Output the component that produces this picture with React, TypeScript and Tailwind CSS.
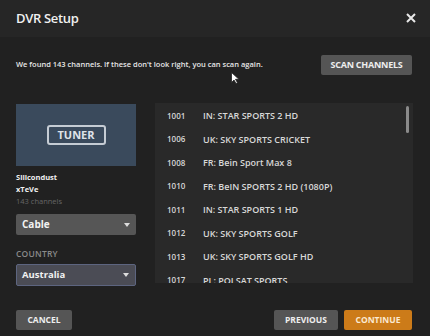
const channels = [
  { num: '1001', name: 'IN: STAR SPORTS 2 HD' },
  { num: '1006', name: 'UK: SKY SPORTS CRICKET' },
  { num: '1008', name: 'FR: Bein Sport Max 8' },
  { num: '1010', name: 'FR: BeIN SPORTS 2 HD (1080P)' },
  { num: '1011', name: 'IN: STAR SPORTS 1 HD' },
  { num: '1012', name: 'UK: SKY SPORTS GOLF' },
  { num: '1013', name: 'UK: SKY SPORTS GOLF HD' },
  { num: '1017', name: 'PL: POLSAT SPORTS' },
];

function Caret() {
  return (
    <svg width="6" height="4" viewBox="0 0 6 4" className="fill-[#ddd]">
      <path d="M0 0h6L3 4z" />
    </svg>
  );
}

export default function App() {
  return (
    <div
      className="relative w-[430px] h-[336px] overflow-hidden bg-[#212121] text-white flex flex-col"
      style={{ fontFamily: '"Open Sans", "Noto Sans", sans-serif' }}
    >
      {/* header */}
      <div className="h-[37px] shrink-0 flex items-center justify-between pl-4 pr-[14px] bg-[#262626]">
        <h1 className="text-[13px] font-semibold tracking-tight text-[#f0f0f0]">DVR Setup</h1>
        <svg width="10" height="10" viewBox="0 0 10 10" className="stroke-[#e8e8e8] -mt-px" strokeWidth="2">
          <path d="M1 1l8 8M9 1l-8 8" />
        </svg>
      </div>

      {/* info row */}
      <div className="flex items-center justify-between pl-4 pr-[18px] mt-[18px]">
        <p className="text-[7.5px] font-semibold text-[#e6e6e6]">
          We found 143 channels. If these don't look right, you can scan again.
        </p>
        <button className="w-[91px] h-[20px] rounded-[2px] bg-[#555] text-[9px] font-bold text-[#eee] tracking-tight">
          SCAN CHANNELS
        </button>
      </div>

      {/* main */}
      <div className="flex gap-[19px] pl-4 pr-[17px] mt-[28px]">
        <div className="w-[120px] shrink-0 flex flex-col">
          <div className="h-[62px] mt-px bg-[#3a4a5c] flex items-center justify-center">
            <div className="w-[59px] h-[20px] rounded-[3px] border-2 border-[#c5ccd4] flex items-center justify-center text-[11px] font-bold text-[#dfe3e8]">
              TUNER
            </div>
          </div>
          <div className="mt-[5px] text-[7.5px] font-bold leading-[12px] text-[#f0f0f0]">Silicondust</div>
          <div className="text-[7.5px] font-bold leading-[12px] text-[#f0f0f0]">xTeVe</div>
          <div className="text-[7.5px] leading-[12px] text-[#666]">143 channels</div>
          <div className="mt-[7px] h-[21px] bg-[#565656] rounded-[2px] flex items-center justify-between pl-[6px] pr-[6px]">
            <span className="text-[10px] font-bold text-[#f2f2f2]">Cable</span>
            <Caret />
          </div>
          <div className="mt-[13px] text-[8.5px] font-semibold text-[#8a8a8a] tracking-wide">COUNTRY</div>
          <div className="mt-[3px] h-[22px] bg-[#4b4c55] border border-[#5d6580] rounded-[2px] flex items-center justify-between pl-[5px] pr-[6px]">
            <span className="text-[9.5px] font-bold text-[#f2f2f2]">Australia</span>
            <Caret />
          </div>
        </div>

        <div className="relative flex-1 h-[186px] bg-[#292929] overflow-hidden">
          <div className="flex flex-col pt-[1px]">
            {channels.map((c) => (
              <div key={c.num} className="h-[23.5px] flex items-center font-semibold text-[#d8d8d8]">
                <span className="w-[36px] pl-3 box-content text-[8px]">{c.num}</span>
                <span className="text-[9px]">{c.name}</span>
              </div>
            ))}
          </div>
          <div className="absolute left-0 right-0 bottom-0 h-[6px] bg-[#212121]" />
          <div className="absolute right-[4px] top-[3px] w-[3px] h-[27px] rounded-full bg-[#8a8a8a]" />
        </div>
      </div>

      {/* footer */}
      <div className="mt-auto mb-[6px] flex items-center justify-between pl-4 pr-[18px]">
        <button className="w-[56px] h-[20px] rounded-[2px] bg-[#555] text-[8.5px] font-bold text-[#eee]">CANCEL</button>
        <div className="flex gap-[6px]">
          <button className="w-[64px] h-[20px] rounded-[2px] bg-[#555] text-[8.5px] font-bold text-[#eee]">PREVIOUS</button>
          <button className="w-[68px] h-[20px] rounded-[2px] bg-[#cc7b19] text-[8.5px] font-bold text-[#fbe9d0]">CONTINUE</button>
        </div>
      </div>

      {/* mouse pointer */}
      <svg className="absolute left-[231px] top-[72px]" width="8" height="12" viewBox="0 0 8 12">
        <path d="M0.5 0.5v10l2.5-2.5 2 3.5 1.5-.8-2-3.4h3.5z" fill="#fff" stroke="#222" strokeWidth="0.8" />
      </svg>
    </div>
  );
}
